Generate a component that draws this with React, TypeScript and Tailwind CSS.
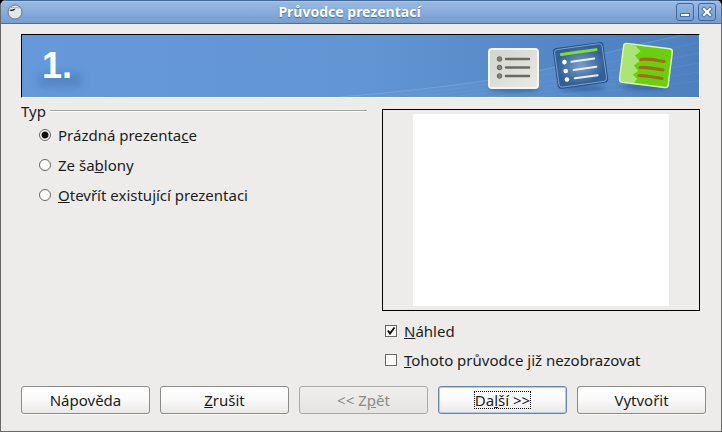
import React, { useState } from "react";

const kinds = [
  { id: "empty", label: <>Prázdná prezenta<u>c</u>e</> },
  { id: "template", label: <>Ze ša<u>b</u>lony</> },
  { id: "open", label: <><u>O</u>tevřít existující prezentaci</> },
];

const buttonBase =
  "flex h-7 min-w-0 flex-1 items-center justify-center rounded-[3px] border text-[15px] leading-5 whitespace-nowrap";
const buttonNormal = "border-[#8b8b89] bg-linear-to-b from-white via-[#fafafa] to-[#e9e8e6] shadow-[0_1px_0_#f8f8f7]";

function TitleBar() {
  return (
    <header className="flex h-6 items-center border-t border-b border-t-[#426997] border-b-[#496f9f] bg-linear-to-b from-[#9abae4] to-[#759dd0] pr-[5px] pl-1.5 shadow-[inset_0_1px_0_#a9c5e9]">
      <svg className="size-4" viewBox="0 0 16 16" aria-hidden="true">
        <circle cx="8" cy="8" r="7" fill="#e5e6e8" stroke="#64748b" />
        <path d="M4 3.5Q6 2.500 7.500 4Q9.500 3 12 4" fill="none" stroke="#8896a5" strokeWidth=".8" />
        <path d="M2 6L5.500 5.500L8.500 4.500L7 6.500L4 7Z" fill="#111" />
      </svg>
      <h1 className="flex-1 text-center text-sm leading-5 font-bold text-white [text-shadow:0_1px_1px_#416da3]">
        Průvodce prezentací
      </h1>
      <div className="flex gap-1">
        <button
          type="button"
          aria-label="Minimalizovat"
          className="flex size-[18px] items-center justify-center rounded-[3px] border border-[#3f679b] bg-linear-to-b from-[#93b5e1] to-[#779fd2]"
        >
          <svg className="size-4" viewBox="0 0 16 16">
            <rect x="3.500" y="9.500" width="9" height="3" fill="#fff" stroke="#4770a4" />
          </svg>
        </button>
        <button
          type="button"
          aria-label="Zavřít"
          className="flex size-[18px] items-center justify-center rounded-[3px] border border-[#3f679b] bg-linear-to-b from-[#93b5e1] to-[#779fd2]"
        >
          <svg className="size-4" viewBox="0 0 16 16">
            <path d="M5 5L11 11M11 5L5 11" stroke="#4770a4" strokeWidth="4" strokeLinecap="square" />
            <path d="M5 5L11 11M11 5L5 11" stroke="#fff" strokeWidth="2.200" strokeLinecap="square" />
          </svg>
        </button>
      </div>
    </header>
  );
}

function BannerArt() {
  return (
    <svg className="h-[62px] w-[360px] shrink-0" viewBox="0 0 360 62" aria-hidden="true">
      <defs>
        <linearGradient id="paper" x1="0" y1="0" x2="1" y2="1">
          <stop offset="0" stopColor="#d2d3cb" />
          <stop offset="1" stopColor="#ebebe6" />
        </linearGradient>
        <radialGradient id="blue">
          <stop offset="0" stopColor="#7c9fc5" />
          <stop offset="1" stopColor="#315f98" />
        </radialGradient>
        <linearGradient id="swoosh" x1="0" y1="0" x2="1" y2="0">
          <stop offset="0" stopColor="#75a3df" stopOpacity=".15" />
          <stop offset=".6" stopColor="#6697d6" stopOpacity=".3" />
          <stop offset="1" stopColor="#6697d6" stopOpacity=".1" />
        </linearGradient>
        <filter id="soft" x="-20%" y="-50%" width="140%" height="200%">
          <feGaussianBlur stdDeviation="2" />
        </filter>
      </defs>
      <path d="M0 62Q160 49 235 27Q300 8 346 0H360V62Z" fill="url(#swoosh)" />
      <g fill="none" stroke="#a2c4ee" strokeOpacity=".14" strokeWidth=".7">
        <path d="M0 62Q160 49 235 27Q300 8 346 0" strokeOpacity=".4" />
        <path d="M40 62Q190 49 360 7" />
        <path d="M70 62Q220 50 360 18" />
        <path d="M105 62Q240 51 360 28" />
        <path d="M145 62Q265 53 360 37" />
        <path d="M190 62Q290 55 360 46" />
      </g>
      <g fill="#234a7d" fillOpacity=".5" filter="url(#soft)">
        <ellipse cx="175" cy="54" rx="25" ry="3" />
        <ellipse cx="243" cy="53" rx="23" ry="3" />
        <ellipse cx="307" cy="52" rx="23" ry="3" />
      </g>

      {/* outline page */}
      <rect x="150" y="14" width="49" height="39" rx="3" fill="url(#paper)" stroke="#f5f5f1" strokeWidth="2" />
      <g stroke="#686963" strokeWidth="2.500" strokeLinecap="round">
        <path d="M167 24H190M167 32.500H190M167 41H190" />
      </g>
      <g fill="#83847e" stroke="#62635e">
        <circle cx="160.500" cy="24" r="2.300" />
        <circle cx="160.500" cy="32.500" r="2.300" />
        <circle cx="160.500" cy="41" r="2.300" />
      </g>

      {/* dark template */}
      <g transform="rotate(-8 241 30)">
        <rect x="217" y="11" width="49" height="39" rx="3" fill="#315f98" stroke="#24518b" strokeWidth="2" />
        <rect x="217.500" y="11.500" width="48" height="38" rx="3" fill="url(#blue)" stroke="#8fb0d8" strokeWidth=".8" />
        <path d="M224 17H259" stroke="#7cdf31" strokeWidth="3" strokeLinecap="round" />
        <path d="M233 25.500H256M234 34H257M234 42.500H257" stroke="#e8f1fa" strokeWidth="2" strokeLinecap="round" />
        <g fill="#fff">
          <circle cx="226" cy="25" r="2.300" />
          <circle cx="226" cy="34" r="2.300" />
          <circle cx="226" cy="42.500" r="2.300" />
        </g>
      </g>

      {/* green template */}
      <g transform="rotate(7 307 30)">
        <rect x="282.500" y="11" width="49" height="39" rx="3" fill="#69d010" />
        <path d="M283 12H294L300 17L295 22L300 27L295 32L300 37L295 41L300 45L297 49.500H283Z" fill="#ace477" />
        <rect x="282.500" y="11" width="49" height="39" rx="3" fill="none" stroke="#dcf8ae" strokeWidth="1.500" />
      </g>
      <g fill="none" stroke="#a66b12" strokeWidth="3.200" strokeLinecap="round">
        <path d="M302 24.500Q308 23 325 26.500" />
        <path d="M301 32.500Q308 32 324 35" />
        <path d="M300 40.500Q307 40.500 323 43.500" />
      </g>
    </svg>
  );
}

function Tick() {
  return (
    <svg className="pointer-events-none absolute inset-0 size-3" viewBox="0 0 12 12" aria-hidden="true">
      <path d="M3 5.500L5 8.500L9.500 2.500" fill="none" stroke="#111" strokeWidth="2" />
    </svg>
  );
}

export default function App() {
  const [kind, setKind] = useState("empty");
  const [preview, setPreview] = useState(true);
  const [skip, setSkip] = useState(false);

  return (
    <div className="bg-black font-['Noto_Sans','Open_Sans',sans-serif] text-[15px] text-[#1c1c1c]">
      <main className="overflow-hidden rounded-t-md border-x border-b border-[#696866] bg-[#edeceb]">
        <TitleBar />
        <form className="pt-[10px] pr-[15px] pb-[17px] pl-5" onSubmit={(e) => e.preventDefault()}>
          <div className="mr-[6px] flex h-16 items-center justify-between overflow-hidden border border-t-black border-r-white border-b-white border-l-black bg-linear-to-r from-[#6699da] via-[#6295d4] to-[#4b7dbd]">
            <span className="relative pl-5 font-['Liberation_Sans',sans-serif] text-4xl font-bold text-white">
              <span className="absolute top-7 left-4 h-3 w-11 rounded-full bg-[#315f9c]/40 blur-[5px]" />
              <span className="relative">1.</span>
            </span>
            <BannerArt />
          </div>

          <div className="mt-[11px] mr-[6px] flex gap-[15px]">
            <section className="min-w-0 flex-1" aria-labelledby="kind-title">
              <div className="-mt-2 flex items-center gap-1">
                <h2 id="kind-title" className="leading-5">Typ</h2>
                <span className="h-[2px] flex-1 border-t border-b border-t-[#9ca8a2] border-b-white" />
              </div>
              <div className="mt-1 flex flex-col gap-[10px] pl-[18px]">
                {kinds.map((k) => (
                  <label key={k.id} className="flex items-center gap-[7px] leading-5">
                    <input
                      type="radio"
                      name="kind"
                      checked={kind === k.id}
                      onChange={() => setKind(k.id)}
                      className="size-3 appearance-none rounded-full border border-[#666663] bg-white checked:bg-[radial-gradient(circle,#111_0_3px,#fff_4px)]"
                    />
                    <span>{k.label}</span>
                  </label>
                ))}
              </div>
            </section>

            <section className="w-[318px] shrink-0">
              <div className="flex h-[202px] justify-center border border-black px-[30px] py-1">
                {preview && <div className="flex-1 bg-white" />}
              </div>
              <div className="mt-[10px] flex flex-col gap-[9px] pl-[3px]">
                <label className="flex items-center gap-[7px] leading-5">
                  <span className="relative flex">
                    <input
                      type="checkbox"
                      checked={preview}
                      onChange={(e) => setPreview(e.target.checked)}
                      className="size-3 appearance-none border border-[#666663] bg-white"
                    />
                    {preview && <Tick />}
                  </span>
                  <span><u>N</u>áhled</span>
                </label>
                <label className="flex items-center gap-[7px] leading-5">
                  <span className="relative flex">
                    <input
                      type="checkbox"
                      checked={skip}
                      onChange={(e) => setSkip(e.target.checked)}
                      className="size-3 appearance-none border border-[#666663] bg-white"
                    />
                    {skip && <Tick />}
                  </span>
                  <span><u>T</u>ohoto průvodce již nezobrazovat</span>
                </label>
              </div>
            </section>
          </div>

          <div className="mt-4 flex gap-[10px]">
            <button type="button" className={`${buttonBase} ${buttonNormal}`}>Nápověda</button>
            <button type="button" className={`${buttonBase} ${buttonNormal}`}><span><u>Z</u>rušit</span></button>
            <button type="button" disabled className={`${buttonBase} border-[#aaa9a7] bg-linear-to-b from-[#efeeed] to-[#e6e5e3] text-[#8b8a88]`}>
              <span>&lt;&lt; Z<u>p</u>ět</span>
            </button>
            <button type="submit" className={`${buttonBase} border-[#6686b2] bg-linear-to-b from-white via-[#fafafa] to-[#e9e8e6] shadow-[inset_0_0_0_1px_#b6cae6]`}>
              <span className="border border-dotted border-black leading-4">Da<u>l</u>ší &gt;&gt;</span>
            </button>
            <button type="button" className={`${buttonBase} ${buttonNormal}`}>Vytvořit</button>
          </div>
        </form>
      </main>
    </div>
  );
}
